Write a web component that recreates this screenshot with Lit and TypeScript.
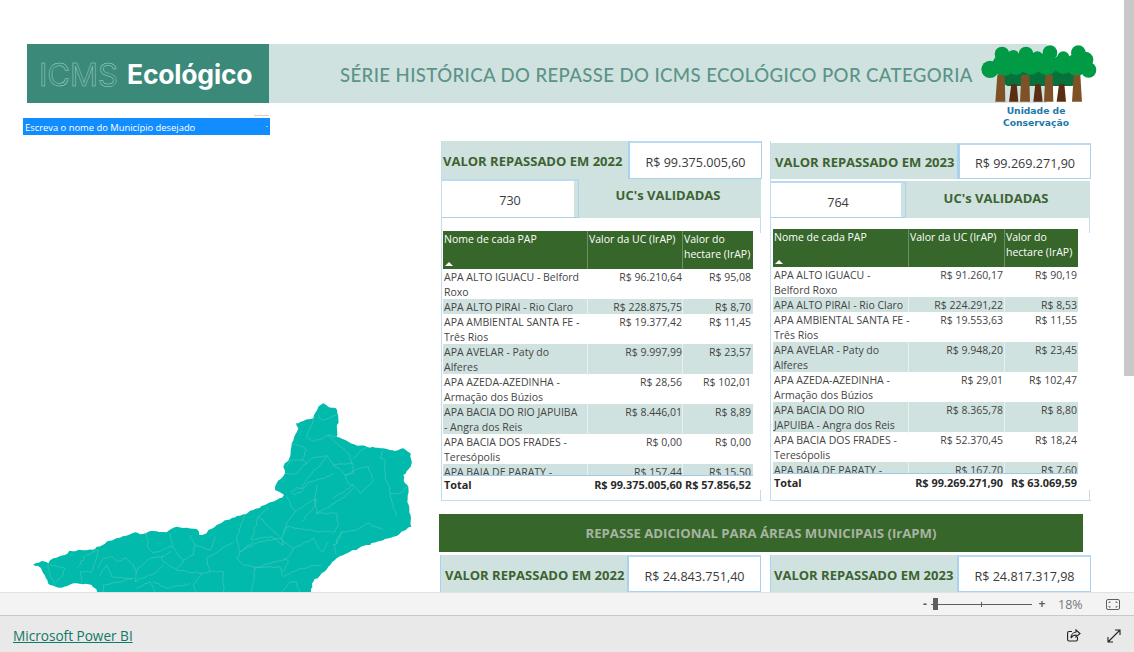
import { LitElement, html, css, svg } from "lit";
import { customElement } from "lit/decorators.js";

type Row = [string, string, string];
const T1: Row[] = [
  ["APA ALTO IGUACU - Belford\nRoxo", "R$ 96.210,64", "R$ 95,08"],
  ["APA ALTO PIRAI - Rio Claro", "R$ 228.875,75", "R$ 8,70"],
  ["APA AMBIENTAL SANTA FE -\nTrês Rios", "R$ 19.377,42", "R$ 11,45"],
  ["APA AVELAR - Paty do\nAlferes", "R$ 9.997,99", "R$ 23,57"],
  ["APA AZEDA-AZEDINHA -\nArmação dos Búzios", "R$ 28,56", "R$ 102,01"],
  ["APA BACIA DO RIO JAPUIBA\n- Angra dos Reis", "R$ 8.446,01", "R$ 8,89"],
  ["APA BACIA DOS FRADES -\nTeresópolis", "R$ 0,00", "R$ 0,00"],
  ["APA BAIA DE PARATY -\nParaty", "R$ 157,44", "R$ 15,50"],
];
const T2: Row[] = [
  ["APA ALTO IGUACU -\nBelford Roxo", "R$ 91.260,17", "R$ 90,19"],
  ["APA ALTO PIRAI - Rio Claro", "R$ 224.291,22", "R$ 8,53"],
  ["APA AMBIENTAL SANTA FE -\nTrês Rios", "R$ 19.553,63", "R$ 11,55"],
  ["APA AVELAR - Paty do\nAlferes", "R$ 9.948,20", "R$ 23,45"],
  ["APA AZEDA-AZEDINHA -\nArmação dos Búzios", "R$ 29,01", "R$ 102,47"],
  ["APA BACIA DO RIO\nJAPUIBA - Angra dos Reis", "R$ 8.365,78", "R$ 8,80"],
  ["APA BACIA DOS FRADES -\nTeresópolis", "R$ 52.370,45", "R$ 18,24"],
  ["APA BAIA DE PARATY -\nParaty", "R$ 167,70", "R$ 7,60"],
];

const OUTLINE =
  "910,25 925,35 948,40 952,55 955,72 951,100 950,125 985,140 1012,152 1040,155 1066,158 1090,160 1125,168 1150,160 1172,175 1174,195 1172,215 1150,240 1155,265 1165,275 1163,310 1168,340 1173,370 1174,395 1150,408 1120,425 1080,438 1040,450 990,470 950,490 925,515 905,535 880,560 873,591 873,620 232,620 232,591 215,570 190,568 160,565 125,578 90,570 78,550 62,518 40,508 65,498 85,505 100,490 135,480 148,467 190,466 225,462 260,440 300,428 345,412 360,418 400,408 440,412 470,395 500,398 530,402 538,420 560,415 565,405 590,390 620,375 660,362 700,345 735,330 770,315 792,300 780,292 765,285 770,265 782,252 795,235 790,215 808,190 812,165 815,145 825,120 835,100 828,85 850,78 880,70 888,50 895,35";

const LINES = [
  "880,70 870,100 860,125 880,140 915,125 925,120 950,125",
  "895,60 905,75 950,60",
  "925,120 960,155 990,180 1000,215 1000,235 975,240",
  "1040,155 1000,190",
  "1090,165 1080,190 1095,195 1095,250 1110,275 1110,295 1140,295 1163,275",
  "1110,295 1115,320 1130,365",
  "815,145 850,155 860,165 845,195 860,205 830,235 795,235",
  "845,195 810,195 800,215",
  "860,205 875,190 920,182 940,210 975,240 985,265 1000,270",
  "940,210 1000,205",
  "975,240 1030,215 1045,215 1060,255 1020,295 1000,270 940,310",
  "940,235 915,250 870,260 850,280 830,278 812,290 825,300 850,285",
  "925,180 870,240 845,280",
  "800,305 825,350 870,320 890,312 880,340 845,380",
  "825,350 800,385 790,420",
  "890,355 950,355 955,385 945,410 910,410 835,400",
  "1000,280 960,315 920,340 890,355 885,320 890,270",
  "835,400 800,395 785,430 790,450 755,425 695,435 705,395 715,365 745,340 740,335",
  "715,365 780,425",
  "1090,405 1040,385 1010,405 965,410 945,450",
  "965,410 960,430 940,450 950,480",
  "380,415 385,460 400,475 455,455 490,495",
  "450,415 460,455",
  "510,420 525,450 570,465 585,425",
  "525,450 520,480 490,495 470,525 430,500 425,485 455,470",
  "650,430 660,470 700,440",
  "650,430 675,360",
  "660,470 650,490 670,510 705,515 700,560 690,600",
  "560,490 640,440",
  "560,490 570,530 610,530 610,600",
  "470,525 545,535 570,530",
  "545,535 520,570 530,600",
  "90,510 135,520 125,545 110,560",
  "85,505 90,540 105,570",
  "170,520 200,480 235,465 230,490 215,530 180,530 185,565",
  "235,520 250,490 275,485 290,500 320,490 340,510 350,530 345,560",
  "235,545 260,510 275,545 340,550 250,570 250,600",
  "345,530 390,490 425,485",
  "345,560 410,530 430,510",
  "400,560 440,580 510,565",
  "350,580 390,560 410,600",
  "705,520 780,515 790,545 840,520 905,510",
  "790,490 805,500 790,530",
  "660,470 720,440 780,430 820,460 880,430 895,460 910,470 925,440",
  "820,460 800,490 705,520",
  "830,560 840,600",
  "780,600 810,560 830,560",
];

let seed = 7;
const rnd = () => {
  seed = (seed * 16807) % 2147483647;
  return seed / 2147483647 - 0.5;
};
function rough(src: string, amp: number, close: boolean) {
  const p = src.split(" ").map((s) => s.split(",").map(Number));
  if (close) p.push(p[0]);
  const out: string[] = [];
  for (let i = 0; i < p.length - 1; i++) {
    const [a, b] = p[i];
    const [c, d] = p[i + 1];
    const n = Math.max(1, Math.round(Math.hypot(c - a, d - b) / 9));
    for (let k = 0; k < n; k++) {
      const t = k / n;
      const j = k === 0 ? 0 : amp;
      out.push(`${(a + (c - a) * t + rnd() * j).toFixed(1)},${(b + (d - b) * t + rnd() * j).toFixed(1)}`);
    }
  }
  if (!close) out.push(p[p.length - 1].join(","));
  return "M" + out.join(" ") + (close ? "Z" : "");
}
const OUTLINE_D = rough(OUTLINE, 5, true);
const LINES_D = LINES.map((l) => rough(l, 5, false));

const CANOPY: [number, number, number][] = [
  [306, 72, 22], [378, 72, 22], [450, 68, 22], [535, 68, 22],
  [340, 78, 18], [412, 82, 18], [490, 82, 18],
  [270, 118, 26], [310, 105, 33], [348, 105, 30], [392, 102, 32], [440, 102, 33],
  [490, 102, 30], [530, 104, 33], [555, 90, 25], [566, 120, 23],
];

@customElement("app-root")
export class AppRoot extends LitElement {
  static styles = css`
    :host { display: flex; flex-direction: column; width: 1134px; height: 652px; overflow: hidden;
      font-family: "Open Sans", "Noto Sans", sans-serif; background: #fff; color: #333; }
    .stage { height: 592px; position: relative; overflow: hidden; flex: none; }
    .thumb { position: absolute; right: 0; top: 0; width: 10px; height: 376px; background: #c8c8c8; }
    .banner { margin: 44px 0 0 27px; width: 1020px; height: 59px; background: #d0e2df; display: flex; align-items: center; }
    .brand { width: 242px; height: 59px; background: #3b8a79; display: flex; align-items: center; box-sizing: border-box; padding: 1px 0 0 12px; gap: 9px; font-family: Inter, sans-serif; line-height: 1; flex: none; }
    .outline { color: transparent; -webkit-text-stroke: 0.5px #a5d3c8; font-weight: 400; width: 79px; font-size: 31px; white-space: nowrap; }
    .eco { color: #fff; font-weight: 700; font-size: 26.5px; letter-spacing: -0.2px; }
    .title { margin-left: 71px; padding-top: 2px; font-family: Lato, sans-serif; font-size: 18.6px; color: #5b9488; letter-spacing: 0.38px; white-space: nowrap; font-weight: 500; }
    .logo { position: absolute; left: 981px; top: 44px; width: 116px; height: 60px; }
    .logotext { position: absolute; left: 986px; top: 104.500px; width: 100px; text-align: center; font: 700 9.2px/12px "DejaVu Sans", sans-serif; color: #1a79ab; }
    .body { display: flex; padding: 15px 0 0 23px; }
    .left { width: 416px; flex: none; display: flex; flex-direction: column; }
    .slicer { width: 247px; height: 17px; background: #118dff; color: #fff; font-size: 9.4px; line-height: 19px; padding-left: 2px; box-sizing: border-box; position: relative; white-space: nowrap; }
    .slicer::before { content: ""; position: absolute; right: 1px; top: -3px; width: 15px; height: 1px; background: #f4c9c4; }
    .slicer::after { content: ""; position: absolute; right: 2px; top: 8px; width: 2px; height: 1px; background: #8cc6fb; }
    .map { display: block; width: 400px; height: 197px; margin: 260px 0 0 -3px; }
    .right { padding-top: 23px; width: 660px; }
    .panels { display: flex; gap: 8px; padding-left: 2px; }
    .panel { width: 321px; height: 360px; box-sizing: border-box; border-left: 1px solid #c4dcf0; border-bottom: 1px solid #c4dcf0; position: relative; flex: none; }
    .panel::before { content: ""; position: absolute; right: 1px; top: 77px; width: 1px; height: 15px; background: #c4dcf0; }
    .panel::after { content: ""; position: absolute; right: 1px; bottom: 0; width: 1px; height: 10px; background: #c4dcf0; }
    .head { display: flex; height: 38px; background: #d0e2df; box-sizing: border-box; }
    .lab { flex: 1; font-weight: 700; color: #3d6331; font-size: 13px; display: flex; align-items: center; white-space: nowrap; padding: 2px 0 0 1px; }
    .card { width: 134px; flex: none; background: #fff; border: 1px solid #a9d2f0; border-top: 2px solid #b9daf3; border-left-width: 2px; box-sizing: border-box; display: flex; align-items: center; justify-content: center; font-size: 12.6px; color: #3a3a3a; padding-top: 4px; }
    .head.two { height: 39px; margin-right: 1px; }
    .head.two .card { width: 137px; box-shadow: inset -4px 0 0 #d0e2df; border-left: 0; font-size: 12.6px; padding-top: 3px; }
    .head.two .lab { justify-content: center; padding: 0 4px 7px 0; }
    .tbl { margin: 13px 0 0 1px; --c: 144px 95px 71px; --p2: 0; --p3: 2px; width: 310px; }
    .alt { padding-top: 1px; }
    .alt .head:first-child { margin-top: 1px; height: 36px; }
    .alt .head:first-child .lab { padding-left: 4px; }
    .alt .head:first-child .card { border-left-width: 3px; }
    .alt .head.two { margin-top: 2px; height: 37px; }
    .alt .head.two .card { width: 135px; padding-top: 5px; }
    .alt .head.two .lab { padding-bottom: 3px; }
    .alt .tbl { --c: 135px 96px 74px; --p2: 1px; --p3: 1px; width: 305px; margin: 11px 0 0 2px; }
    .hr, .r { display: grid; grid-template-columns: var(--c); }
    .hr { background: #366629; color: #fff; height: 38px; font-size: 10.5px; line-height: 15px; box-sizing: border-box; }
    .hr > div { padding: 1px 1px 0; border-left: 1px solid #6d8f62; position: relative; white-space: pre; }
    .hr > div:first-child { border-left: 0; }
    .caret { position: absolute; left: 2px; bottom: 3px; width: 0; height: 0; border: 4px solid transparent; border-top: 0; border-bottom: 4px solid #fff; }
    .rows { height: 207px; overflow: hidden; border-bottom: 1px solid #9cc8ea; box-sizing: border-box; }
    .r { font-size: 10.5px; line-height: 15px; color: #444; }
    .r:nth-child(even) { background: #d0e2df; }
    .r > div { padding: 1px 0 0 1px; margin-bottom: -1px; white-space: pre; }
    .r > div:nth-child(2) { padding-right: var(--p2); }
    .r > div:nth-child(3) { padding-right: var(--p3); }
    .r > div + div { text-align: right; border-left: 1px solid transparent; }
    .r:nth-child(even) > div + div { border-left-color: #e8f1ef; }
    .tot { display: grid; grid-template-columns: var(--c); font-weight: 700; font-size: 10.9px; line-height: 16px; color: #2a2a2a; white-space: nowrap; padding-top: 1px; }
    .tot > div { padding-left: 1px; }
    .tot > div:nth-child(2) { text-align: right; padding-right: var(--p2); }
    .tot > div:nth-child(3) { text-align: right; padding-right: var(--p3); }
    .strip { margin-top: 13px; width: 644px; height: 38px; background: #366629; color: #a9b3a2; font-weight: 700; font-size: 13.18px; display: flex; align-items: center; justify-content: center; }
    .panels.low { margin-top: 3px; padding-left: 1px; gap: 9px; }
    .low .head { width: 321px; height: 37px; border-left: 1px solid #a9d2f0; }
    .low .lab { padding-left: 4px; }
    .low .head + .head .lab { padding-left: 3px; }
    .zoombar { height: 23px; box-sizing: border-box; background: #f3f3f3; border-top: 1px solid #e1e1e1; display: flex; align-items: center; justify-content: flex-end; flex: none; color: #605e5c; font-size: 12px; }
    .zm { width: 8px; text-align: center; font-weight: 700; line-height: 14px; }
    .slider { width: 101px; height: 1px; background: #605e5c; position: relative; margin: 0 6px 0 2px; }
    .slider .h { position: absolute; left: 2px; top: -6px; width: 5px; height: 12px; background: #605e5c; }
    .slider .t { position: absolute; left: 50px; top: -2px; width: 1px; height: 5px; background: #605e5c; }
    .pct { margin: 0 24px 0 12px; color: #777; width: 24px; font-size: 12.5px; }
    .fit { margin-right: 14px; display: block; }
    .foot { flex: 1; background: #e9e9e9; border-top: 1px solid #c8c8c8; display: flex; align-items: center; padding: 3px 13px 0 13px; box-sizing: border-box; }
    .foot a { color: #117865; text-decoration: underline; font-size: 13.6px; flex: 1; }
    .foot svg { display: block; margin-left: 26px; }
  `;

  private table(rows: Row[], total: [string, string]) {
    return html`<div class="tbl">
      <div class="hr">
        <div>Nome de cada PAP<span class="caret"></span></div>
        <div>Valor da UC (IrAP)</div>
        <div>${"Valor do\nhectare (IrAP)"}</div>
      </div>
      <div class="rows">
        ${rows.map(
          (r) => html`<div class="r"><div>${r[0]}</div><div>${r[1]}</div><div>${r[2]}</div></div>`
        )}
      </div>
      <div class="tot"><div>Total</div><div>${total[0]}</div><div>${total[1]}</div></div>
    </div>`;
  }

  private panel(year: string, val: string, n: string, rows: Row[], tot: [string, string], alt = false) {
    return html`<section class="panel ${alt ? "alt" : ""}">
      <div class="head"><div class="lab">VALOR REPASSADO EM ${year}</div><div class="card">${val}</div></div>
      <div class="head two"><div class="card">${n}</div><div class="lab">UC's VALIDADAS</div></div>
      ${this.table(rows, tot)}
    </section>`;
  }

  render() {
    return html`
      <div class="stage">
        <div class="thumb"></div>
        <div class="banner">
          <div class="brand"><span class="outline">ICMS</span><span class="eco">Ecológico</span></div>
          <div class="title">SÉRIE HISTÓRICA DO REPASSE DO ICMS ECOLÓGICO POR CATEGORIA</div>
        </div>
        <svg class="logo" viewBox="243 42 348 180">
          <rect x="312" y="120" width="216" height="48" rx="14" fill="#06713a" />
          ${[[342, 162, 327, 355], [414, 162, 400, 428], [485, 162, 470, 498]].map(
            (t) => svg`<polygon fill="#5a2e12" points="${t[0] - 8},${t[1]} ${t[0] + 8},${t[1]} ${t[3]},215 ${t[2]},215" />`
          )}
          ${CANOPY.map((c) => svg`<circle cx=${c[0]} cy=${c[1]} r=${c[2]} fill="#019a45" />`)}
          ${[[292, 314, 286, 316], [364, 388, 360, 390], [436, 458, 432, 460], [521, 541, 516, 546]].map(
            (t) => svg`<polygon fill="#7f5126" points="${t[0]},135 ${t[1]},135 ${t[3]},215 ${t[2]},215" />`
          )}
        </svg>
        <div class="logotext">Unidade de<br />Conservação</div>
        <div class="body">
          <div class="left">
            <div class="slicer">Escreva o nome do Município desejado</div>
            <svg class="map" viewBox="0 0 1200 591">
              <path d=${OUTLINE_D} fill="#02baab" />
              ${LINES_D.map((d) => svg`<path d=${d} fill="none" stroke="#4cc9bb" stroke-width="1.8" />`)}
            </svg>
          </div>
          <div class="right">
            <div class="panels">
              ${this.panel("2022", "R$ 99.375.005,60", "730", T1, ["R$ 99.375.005,60", "R$ 57.856,52"])}
              ${this.panel("2023", "R$ 99.269.271,90", "764", T2, ["R$ 99.269.271,90", "R$ 63.069,59"], true)}
            </div>
            <div class="strip">REPASSE ADICIONAL PARA ÁREAS MUNICIPAIS (IrAPM)</div>
            <div class="panels low">
              <div class="head"><div class="lab">VALOR REPASSADO EM 2022</div><div class="card">R$ 24.843.751,40</div></div>
              <div class="head"><div class="lab">VALOR REPASSADO EM 2023</div><div class="card">R$ 24.817.317,98</div></div>
            </div>
          </div>
        </div>
      </div>
      <div class="zoombar">
        <span class="zm">-</span>
        <div class="slider"><span class="h"></span><span class="t"></span></div>
        <span class="zm">+</span>
        <span class="pct">18%</span>
        <svg class="fit" width="14" height="11" viewBox="0 0 14 11" fill="none" stroke="#605e5c">
          <rect x="0.5" y="0.5" width="13" height="10" rx="1.5" />
          <path d="M3 4V3H4.500M9.500 3H11V4M3 7V8H4.500M9.500 8H11V7" />
        </svg>
      </div>
      <div class="foot">
        <a href="#">Microsoft Power BI</a>
        <svg width="14" height="13" viewBox="0 0 14 13" fill="none" stroke="#222" stroke-width="1.1">
          <path d="M5 2.500H2A1.500 1.500 0 0 0 .6 4V10.500A1.500 1.500 0 0 0 2 12H9A1.500 1.500 0 0 0 10.500 10.500V8" />
          <path d="M9 1 13 4.500 9 8V6C6.500 6 5 7 4 9 4 6 6 3.300 9 3Z" />
        </svg>
        <svg width="14" height="14" viewBox="0 0 14 14" fill="none" stroke="#222" stroke-width="1.1">
          <path d="M1 13 13 1M8 1H13V6M1 8V13H6" />
        </svg>
      </div>
    `;
  }
}
